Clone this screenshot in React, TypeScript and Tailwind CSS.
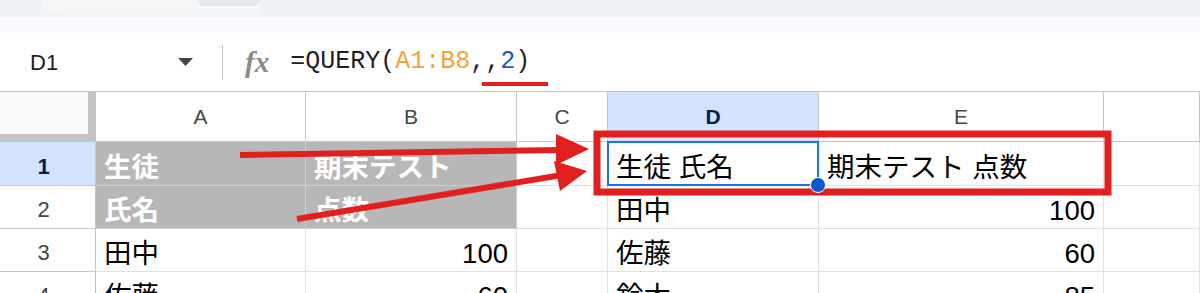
import React from 'react';

const cols = ['A', 'B', 'C', 'D', 'E', ''];

type Cell = { text?: string; right?: boolean; head?: boolean; sel?: boolean };

const rows: { num: string; active?: boolean; cells: Cell[] }[] = [
  {
    num: '1',
    active: true,
    cells: [
      { text: '生徒', head: true },
      { text: '期末テスト', head: true },
      {},
      { text: '生徒 氏名', sel: true },
      { text: '期末テスト 点数' },
      {},
    ],
  },
  {
    num: '2',
    cells: [{ text: '氏名', head: true }, { text: '点数', head: true }, {}, { text: '田中' }, { text: '100', right: true }, {}],
  },
  {
    num: '3',
    cells: [{ text: '田中' }, { text: '100', right: true }, {}, { text: '佐藤' }, { text: '60', right: true }, {}],
  },
  {
    num: '4',
    cells: [{ text: '佐藤' }, { text: '60', right: true }, {}, { text: '鈴木' }, { text: '85', right: true }, {}],
  },
];

function Annotations() {
  // red markup drawn over the sheet
  return (
    <svg className="absolute inset-0 z-10 pointer-events-none" width="1200" height="293" viewBox="0 0 1200 293">
      <rect x="482" y="82" width="66" height="4" fill="#e21f1f" />
      <rect x="597" y="134" width="511" height="58" fill="none" stroke="#e21f1f" strokeWidth="7" />
      <line x1="240" y1="155" x2="562" y2="150" stroke="#e21f1f" strokeWidth="6" />
      <polygon points="589,149 556,134 556,165" fill="#e21f1f" />
      <line x1="297" y1="219" x2="562" y2="175" stroke="#e21f1f" strokeWidth="6" />
      <polygon points="587,171 554,161 560,191" fill="#e21f1f" />
    </svg>
  );
}

export default function App() {
  return (
    <div className="relative w-[1200px] h-[293px] overflow-hidden bg-white font-['Liberation_Sans','Noto_Sans_CJK_JP',sans-serif]">
      {/* browser chrome remnants */}
      <div className="h-[17px] bg-[#eef1f5] flex">
        <div className="ml-[42px] w-[218px] h-[15px] bg-[#f5f6f8] rounded-bl-[16px] flex justify-end">
          <div className="w-[62px] h-[6px] bg-[#e4e7eb] rounded-b-[6px]" />
        </div>
      </div>
      <div className="h-[16px] bg-[#f8fafc]" />

      {/* formula bar */}
      <div className="h-[59px] flex items-center border-b border-[#c4c7c5]">
        <div className="w-[222px] pl-[30px] pr-[29px] flex items-center justify-between">
          <span className="text-[22px] text-[#1f1f1f]">D1</span>
          <svg width="15" height="8" viewBox="0 0 15 8">
            <path d="M0 0h15L7.5 8z" fill="#444746" />
          </svg>
        </div>
        <div className="w-px h-[34px] bg-[#c4c7c5]" />
        <span className="ml-[22px] font-['Liberation_Serif'] italic font-bold text-[29px] text-[#8a8a8a] leading-none">fx</span>
        <span className="ml-[21px] font-['Liberation_Mono',monospace] text-[25px] text-[#1f1f1f]">
          =QUERY(<span className="text-[#f2a33a]">A1:B8</span>,,<span className="text-[#1a5bc4]">2</span>)
        </span>
      </div>

      {/* sheet grid */}
      <div className="grid grid-cols-[96px_210px_211px_91px_211px_285px_96px] grid-rows-[50px_44px_43px_43px_43px]">
        <div className="bg-[#f8f9fa] border-r-[8px] border-b-[8px] border-[#c4c4c4]" />
        {cols.map((c, i) => (
          <div
            key={i}
            className={`flex items-center justify-center text-[21px] border-r border-b border-[#c4c7c5] ${
              c === 'D' ? 'bg-[#d3e3fd] font-bold text-[#041e49]' : 'text-[#444746]'
            }`}
          >
            {c}
          </div>
        ))}

        {rows.map((r) => (
          <React.Fragment key={r.num}>
            <div
              className={`flex items-center justify-center pr-[8px] pt-[5px] text-[22px] border-r border-b border-[#c4c7c5] ${
                r.active ? 'bg-[#d3e3fd] font-bold text-[#041e49]' : 'text-[#444746]'
              }`}
            >
              {r.num}
            </div>
            {r.cells.map((cell, j) => (
              <div
                key={j}
                className={`relative flex items-center px-[8px] pt-[8px] text-[27.5px] leading-none border-r border-b ${
                  cell.head ? 'bg-[#b7b7b7] border-[#cdcdcd] text-white font-bold' : 'border-[#e1e1e1] text-black'
                } ${cell.right ? 'justify-end' : ''}`}
              >
                {cell.text}
                {cell.sel && (
                  <>
                    <span className="absolute inset-[-1px] border-[2.5px] border-[#1a73e8]" />
                    <span className="absolute z-20 right-[-8px] bottom-[-8px] w-[16px] h-[16px] rounded-full bg-[#0b57d0] border border-white" />
                  </>
                )}
              </div>
            ))}
          </React.Fragment>
        ))}
      </div>

      <Annotations />
    </div>
  );
}
